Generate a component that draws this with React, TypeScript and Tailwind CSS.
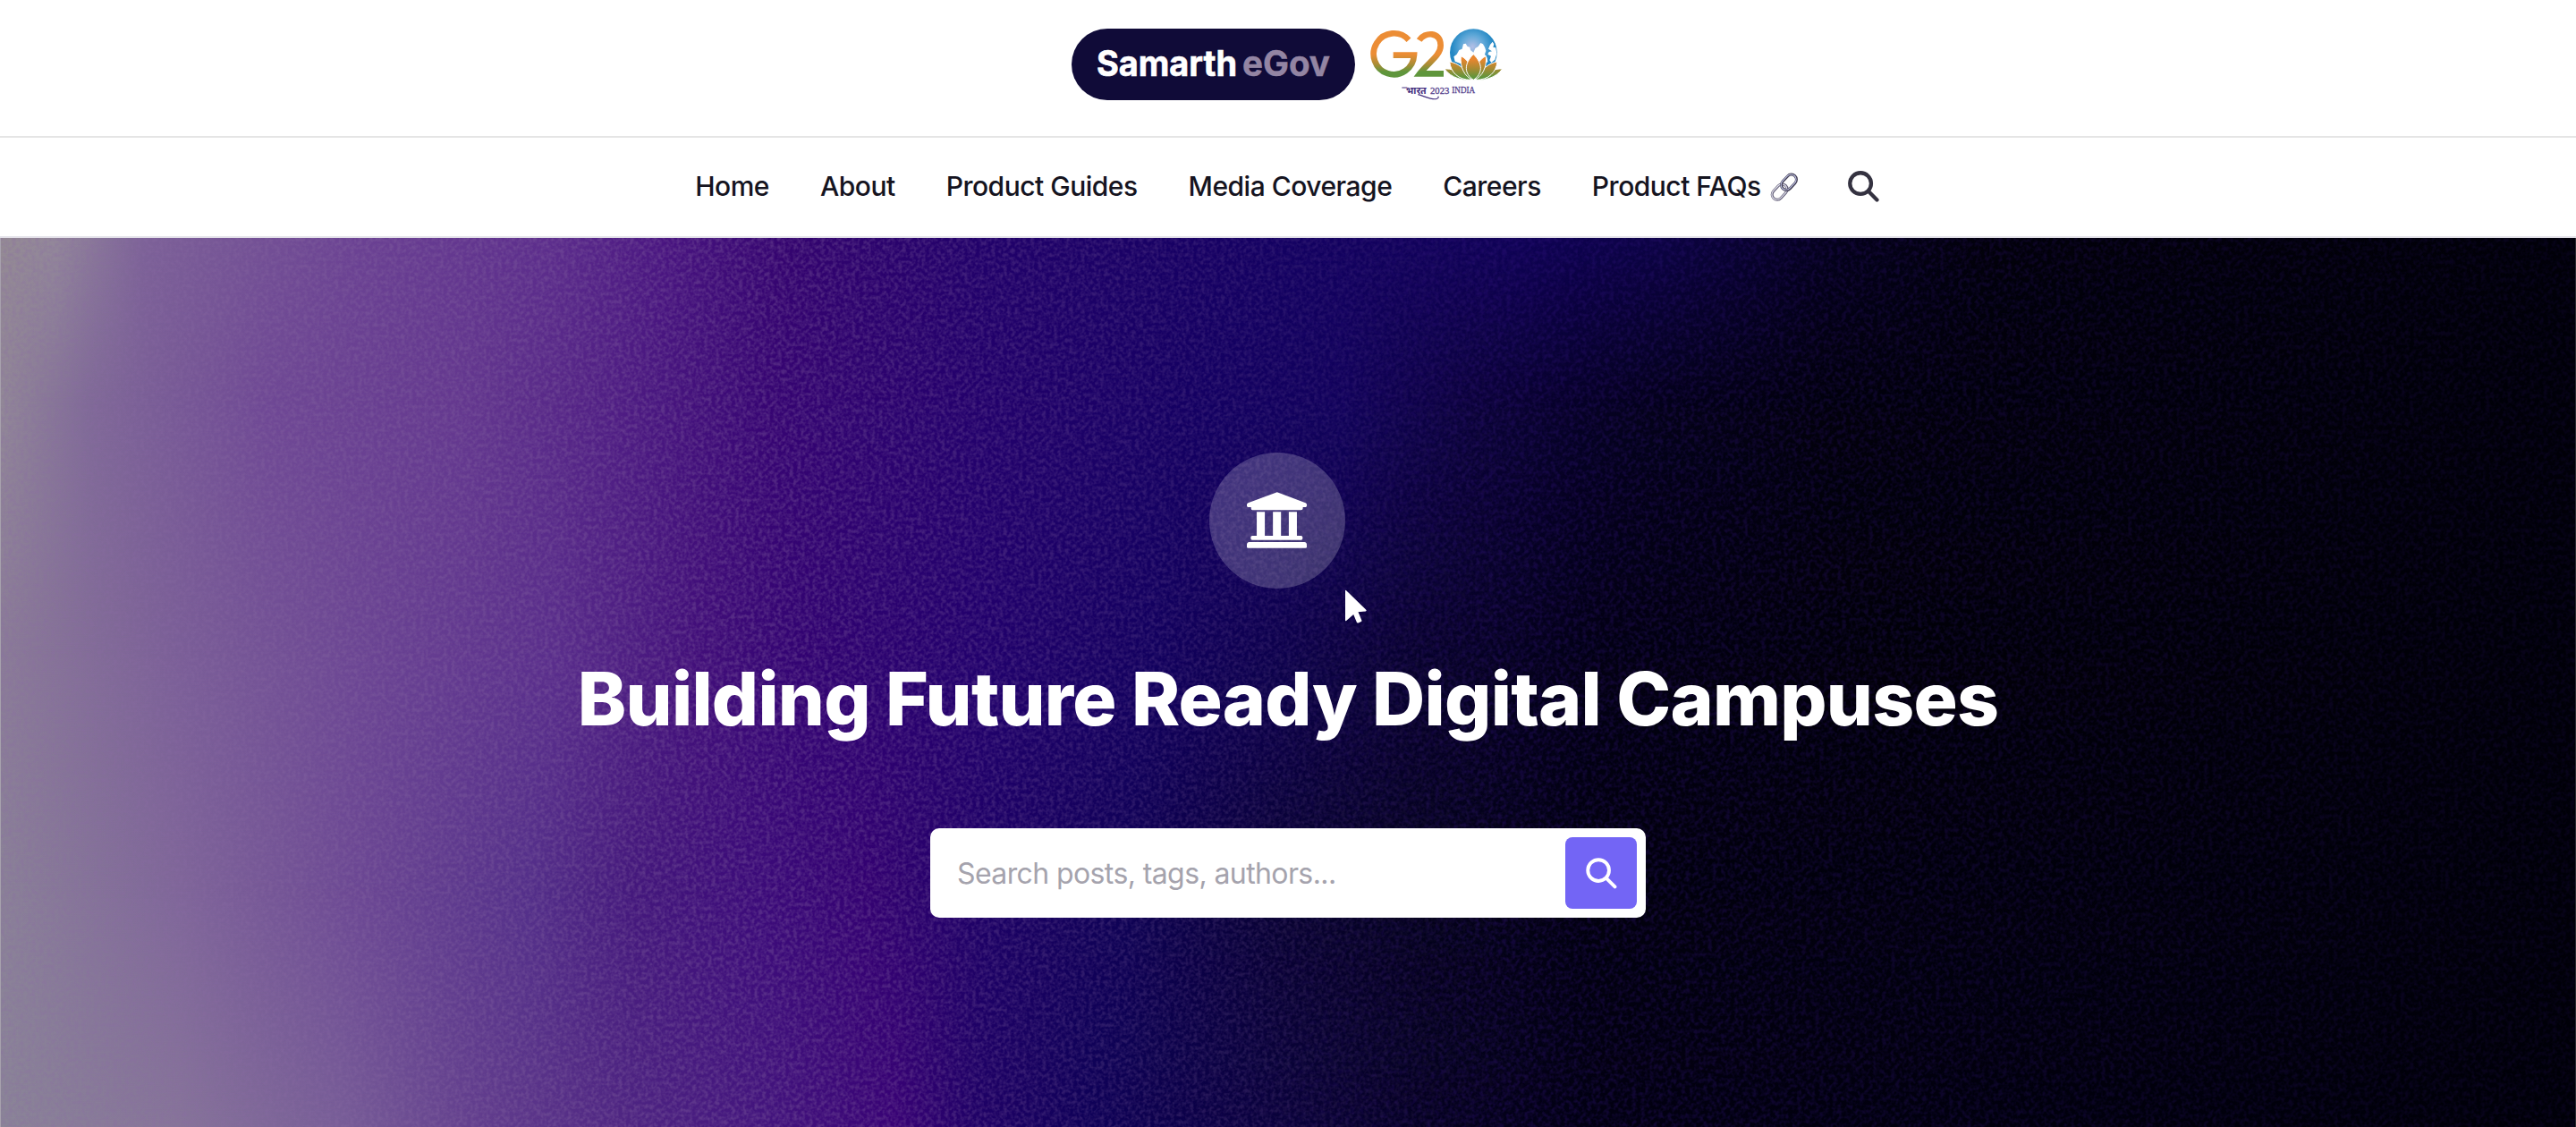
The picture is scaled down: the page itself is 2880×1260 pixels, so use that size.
import React from 'react';

const navItems = ['Home', 'About', 'Product Guides', 'Media Coverage', 'Careers'];

interface BackdropRow {
  y: number;
  stops: [number, string][];
}

// horizontal colour bands, each one fades into the next
const backdropRows: BackdropRow[] = [
  {
    y: 0,
    stops: [
      [0, '#948a94'],
      [60, '#93889a'],
      [160, '#7d6298'],
      [400, '#6b4293'],
      [620, '#5c2d8c'],
      [740, '#4a1681'],
      [880, '#34046f'],
      [1100, '#21016a'],
      [1440, '#130161'],
      [1700, '#0f0256'],
      [1860, '#0c0344'],
      [2040, '#05021e'],
      [2220, '#02010b'],
      [2880, '#010009'],
    ],
  },
  {
    y: 190,
    stops: [
      [0, '#928898'],
      [100, '#806a98'],
      [300, '#6f4895'],
      [520, '#64388f'],
      [700, '#4e1c83'],
      [860, '#370573'],
      [1100, '#23016c'],
      [1350, '#140162'],
      [1500, '#10025a'],
      [1650, '#0a0238'],
      [1850, '#04021a'],
      [2050, '#02010c'],
      [2880, '#010009'],
    ],
  },
  {
    y: 470,
    stops: [
      [0, '#8b7c98'],
      [200, '#7b5f98'],
      [400, '#6c4694'],
      [620, '#5a2e8c'],
      [780, '#420f7a'],
      [900, '#320372'],
      [1100, '#22016d'],
      [1290, '#13015f'],
      [1440, '#0c024a'],
      [1580, '#07022c'],
      [1800, '#030113'],
      [2100, '#020009'],
      [2880, '#010009'],
    ],
  },
  {
    y: 740,
    stops: [
      [0, '#8b8298'],
      [200, '#80679a'],
      [400, '#6c4894'],
      [590, '#54308a'],
      [710, '#44187c'],
      [850, '#3c0b7a'],
      [970, '#340272'],
      [1110, '#1c0165'],
      [1260, '#0f0255'],
      [1430, '#080231'],
      [1600, '#04021a'],
      [1800, '#02010e'],
      [2880, '#010009'],
    ],
  },
  {
    y: 994,
    stops: [
      [0, '#8b8598'],
      [200, '#87759a'],
      [380, '#785e98'],
      [530, '#633f8e'],
      [700, '#4f2683'],
      [850, '#44167e'],
      [1000, '#390376'],
      [1090, '#200267'],
      [1220, '#0f0258'],
      [1440, '#0a033a'],
      [1600, '#050220'],
      [1800, '#030112'],
      [2880, '#010009'],
    ],
  },
];

function Backdrop() {
  return (
    <svg className="absolute inset-0 h-full w-full" viewBox="0 0 2880 994" preserveAspectRatio="none">
      <defs>
        {backdropRows.map((row, i) => (
          <linearGradient key={row.y} id={`band-${i}`} gradientUnits="userSpaceOnUse" x1="0" y1="0" x2="2880" y2="0">
            {row.stops.map(([x, color]) => (
              <stop key={x} offset={x / 2880} stopColor={color} />
            ))}
          </linearGradient>
        ))}
        {backdropRows.slice(0, -1).map((row, i) => (
          <React.Fragment key={row.y}>
            <linearGradient
              id={`fade-${i}`}
              gradientUnits="userSpaceOnUse"
              x1="0"
              y1={row.y}
              x2="0"
              y2={backdropRows[i + 1].y}
            >
              <stop offset="0" stopColor="#fff" />
              <stop offset="1" stopColor="#fff" stopOpacity="0" />
            </linearGradient>
            <mask id={`mask-${i}`} maskUnits="userSpaceOnUse" x="0" y="0" width="2880" height="994" style={{ maskType: 'alpha' }}>
              <rect width="2880" height="994" fill={`url(#fade-${i})`} />
            </mask>
          </React.Fragment>
        ))}
        <filter id="grain" x="0" y="0" width="100%" height="100%" colorInterpolationFilters="sRGB">
          <feTurbulence type="fractalNoise" baseFrequency="0.23" numOctaves="2" seed="4" />
          <feColorMatrix values="0 0 0 0 0.54  0 0 0 0 0.42  0 0 0 0 0.64  2.6 0 0 0 -0.95" />
        </filter>
        <linearGradient id="grain-fade">
          <stop offset="0" stopColor="#fff" stopOpacity="0.3" />
          <stop offset="0.3" stopColor="#fff" stopOpacity="0.33" />
          <stop offset="0.48" stopColor="#fff" stopOpacity="0.2" />
          <stop offset="0.62" stopColor="#fff" stopOpacity="0" />
        </linearGradient>
        <mask id="grain-mask" style={{ maskType: 'alpha' }}>
          <rect width="2880" height="994" fill="url(#grain-fade)" />
        </mask>
        {/* the dark side gets a bluer speckle */}
        <filter id="grain-dark" x="0" y="0" width="100%" height="100%" colorInterpolationFilters="sRGB">
          <feTurbulence type="fractalNoise" baseFrequency="0.2" numOctaves="2" seed="9" />
          <feColorMatrix values="0 0 0 0 0.2  0 0 0 0 0.08  0 0 0 0 0.5  2.8 0 0 0 -1.1" />
        </filter>
        <linearGradient id="grain-dark-fade">
          <stop offset="0.45" stopColor="#fff" stopOpacity="0" />
          <stop offset="0.58" stopColor="#fff" stopOpacity="0.32" />
          <stop offset="1" stopColor="#fff" stopOpacity="0.14" />
        </linearGradient>
        <mask id="grain-dark-mask" style={{ maskType: 'alpha' }}>
          <rect width="2880" height="994" fill="url(#grain-dark-fade)" />
        </mask>
      </defs>
      {backdropRows
        .map((row, i) => (
          <rect
            key={row.y}
            width="2880"
            height="994"
            fill={`url(#band-${i})`}
            mask={i < backdropRows.length - 1 ? `url(#mask-${i})` : undefined}
          />
        ))
        .reverse()}
      <g mask="url(#grain-mask)">
        <rect width="2880" height="994" filter="url(#grain)" />
      </g>
      <g mask="url(#grain-dark-mask)">
        <rect width="2880" height="994" filter="url(#grain-dark)" />
      </g>
    </svg>
  );
}

function G20Logo() {
  return (
    <svg className="h-[82px] w-[150px]" viewBox="0 0 450 246" fill="none">
      <defs>
        <linearGradient id="tricolor" gradientUnits="userSpaceOnUse" x1="0" y1="14" x2="0" y2="170">
          <stop offset="0.5" stopColor="#ec8d35" />
          <stop offset="0.72" stopColor="#a98d35" />
          <stop offset="0.88" stopColor="#5f963c" />
        </linearGradient>
        <linearGradient id="petal" gradientUnits="userSpaceOnUse" x1="0" y1="92" x2="0" y2="178">
          <stop offset="0.2" stopColor="#e8862f" />
          <stop offset="0.55" stopColor="#a98a32" />
          <stop offset="0.9" stopColor="#5f963c" />
        </linearGradient>
        <radialGradient id="globe" cx="0.48" cy="0.38" r="0.55">
          <stop offset="0" stopColor="#b3bfe6" />
          <stop offset="0.45" stopColor="#5fa8d8" />
          <stop offset="0.8" stopColor="#2488c4" />
        </radialGradient>
      </defs>
      <g stroke="url(#tricolor)" strokeWidth="20">
        <path d="M135 44 A68 69 0 1 0 153 95 H83" />
        <path d="M170 45 C188 16 242 15 242 62 C242 96 202 118 172 157 H252" />
      </g>
      <circle cx="352" cy="86" r="79" fill="url(#globe)" />
      <path
        d="M290 116 L286 100 L296 92 L304 78 L314 74 L318 58 L326 56 L332 66 L340 68 L342 78 L352 86 L358 72 L368 66 L376 54 L384 58 L390 68 L394 80 L390 92 L398 104 L400 118 L352 140z M408 60 L416 50 L421 58 L418 68 L427 70 L430 90 L424 110 L412 120 L406 112 L411 98 L400 92 L404 84 L414 82 L402 74z"
        fill="#fff"
      />
      <g fill="url(#petal)" stroke="#fff" strokeWidth="3">
        <path d="M255 141 C278 140 300 146 318 170 C330 180 345 178 352 178 C320 182 276 172 255 141z" />
        <path d="M449 141 C426 140 404 146 386 170 C374 180 359 178 352 178 C384 182 428 172 449 141z" />
        <path d="M272 117 C300 122 325 140 344 178 C300 178 276 152 272 117z" />
        <path d="M432 117 C404 122 379 140 360 178 C404 178 428 152 432 117z" />
        <path d="M310 98 C332 108 346 130 350 178 C322 168 306 134 310 98z" />
        <path d="M394 98 C372 108 358 130 354 178 C382 168 398 134 394 98z" />
        <path d="M352 92 C386 125 382 158 352 178 C322 158 318 125 352 92z" />
      </g>
      <text x="126" y="226" className="font-['Noto_Sans',sans-serif] font-bold" fontSize="31" fill="#45307f" textLength="68" lengthAdjust="spacingAndGlyphs">
        भारत
      </text>
      <path d="M112 204 H130 M166 227 C186 232 208 244 226 242 C235 240 236 235 233 233" stroke="#45307f" strokeWidth="3.5" />
      <text x="207" y="224" className="font-['Liberation_Serif',serif]" fontSize="29" fill="#55418d" stroke="#55418d" strokeWidth="0.8" textLength="64" lengthAdjust="spacingAndGlyphs">
        2023
      </text>
      <text x="280" y="222" className="font-['Liberation_Serif',serif]" fontSize="29" fill="#55418d" stroke="#55418d" strokeWidth="0.8" textLength="77" lengthAdjust="spacingAndGlyphs">
        INDIA
      </text>
    </svg>
  );
}

function SamarthLogo() {
  return (
    <svg className="h-20 w-[317px]" viewBox="0 0 317 80">
      <rect width="317" height="80" rx="40" fill="#100b38" />
      <g className="font-['Inter',sans-serif] font-bold" fontSize="39.5">
        <text x="28" y="53" fill="#fff" stroke="#fff" strokeWidth="0.7" textLength="157" lengthAdjust="spacingAndGlyphs">
          Samarth
        </text>
        <text x="191" y="53" fill="#9385a3" stroke="#9385a3" strokeWidth="0.5" textLength="98" lengthAdjust="spacingAndGlyphs">
          eGov
        </text>
      </g>
    </svg>
  );
}

function SearchIcon({ className, strokeWidth }: { className: string; strokeWidth: number }) {
  return (
    <svg className={className} viewBox="0 0 36 36" fill="none" stroke="currentColor" strokeWidth={strokeWidth} strokeLinecap="round">
      <circle cx="14.5" cy="14.5" r="12.2" />
      <path d="M23.5 23.5 L33.4 33.4" />
    </svg>
  );
}

function LinkIcon() {
  return (
    <svg className="size-8" viewBox="0 0 32 32" fill="none">
      <g transform="rotate(-47 16 16)">
        <rect x="-1.5" y="10.2" width="19.5" height="11.4" rx="5.7" stroke="#625e76" strokeWidth="3" />
        <rect x="-1.7" y="10" width="19.5" height="11.4" rx="5.7" stroke="#e2e1ee" strokeWidth="1.2" />
        <rect x="13.5" y="10.4" width="19.5" height="11.4" rx="5.7" stroke="#3f3b50" strokeWidth="3" />
        <rect x="13.3" y="10" width="19.5" height="11.4" rx="5.7" stroke="#bfc2e4" strokeWidth="1.1" />
      </g>
    </svg>
  );
}

function CampusIcon() {
  return (
    <svg className="mr-0.5 mb-0.5 h-[63px] w-[67px]" viewBox="0 0 200 187" fill="#fff">
      <path d="M101 0 L196 36 Q200 38 200 42 V46 Q200 50 196 50 H187 V54 Q187 60 181 60 H19 Q14 60 14 54 V50 H4 Q0 50 0 46 V42 Q0 38 4 36z" />
      <path d="M33 66 H60 V147 H33z M87 66 H114 V147 H87z M140 66 H167 V147 H140z" />
      <rect x="13" y="146" width="173" height="14" rx="5" />
      <path d="M8 167 H192 Q200 168 200 176 V182 Q200 187 195 187 H5 Q0 187 0 182 V176 Q0 168 8 167z" />
    </svg>
  );
}

export default function App() {
  return (
    <div className="flex h-[1260px] w-full flex-col overflow-hidden bg-white font-['Inter',sans-serif]">
      <header className="flex h-[154px] shrink-0 items-start justify-center gap-[15px] border-b-2 border-[#e5e5e5] pt-[30px] pr-0.5">
        <div className="mt-0.5">
          <SamarthLogo />
        </div>
        <G20Logo />
      </header>

      <nav className="flex h-28 shrink-0 items-center justify-center gap-[57px] border-b-2 border-[#e5e3ea] pr-0.5 pb-px text-[30px] font-medium tracking-[-0.5px] text-[#15141f]">
        {navItems.map((item) => (
          <a key={item} href="#">
            {item}
          </a>
        ))}
        <a href="#" className="flex items-center gap-2.5">
          Product FAQs
          <LinkIcon />
        </a>
        <button aria-label="Search" className="-ml-0.5">
          <SearchIcon className="size-[35px] text-[#343240]" strokeWidth={4.4} />
        </button>
      </nav>

      <main className="relative flex flex-1 flex-col items-center border-x border-l-[#a7a1ad] border-r-[#2a2a30] bg-[#010009] pt-[240px]">
        <Backdrop />
        <div className="relative mr-6 flex size-[152px] items-center justify-center rounded-full bg-white/20">
          <CampusIcon />
          <svg className="absolute top-[153px] left-[151px] h-[39px] w-[26px]" viewBox="0 0 26 39" fill="#fff">
            <path d="M1 1.5 Q1 0 2.2 1.2 L24.5 23 Q25 24.2 23.8 24.4 L15.5 25.2 L19.4 34.6 Q19.6 35.6 18.7 36.1 L15.4 37.5 Q14.3 37.8 13.9 36.8 L10.2 28 L2.2 35 Q1 35.6 1 34.2z" />
          </svg>
        </div>
        <h1 className="relative mt-[74px] text-[82px] leading-[100px] font-extrabold tracking-[-0.75px] whitespace-nowrap text-white">
          Building Future Ready Digital Campuses
        </h1>
        <form className="relative mt-[94px] flex h-[100px] w-[800px] items-center rounded-[10px] bg-white p-2.5">
          <input
            type="text"
            placeholder="Search posts, tags, authors..."
            className="min-w-0 flex-1 pt-0.5 pl-5 text-[32px] tracking-[-0.6px] outline-none placeholder:text-[#a5a3ad]"
          />
          <button type="button" aria-label="Search" className="flex size-20 items-center justify-center rounded-lg bg-[#7365f5] text-white">
            <SearchIcon className="size-[35px]" strokeWidth={4} />
          </button>
        </form>
      </main>
    </div>
  );
}
